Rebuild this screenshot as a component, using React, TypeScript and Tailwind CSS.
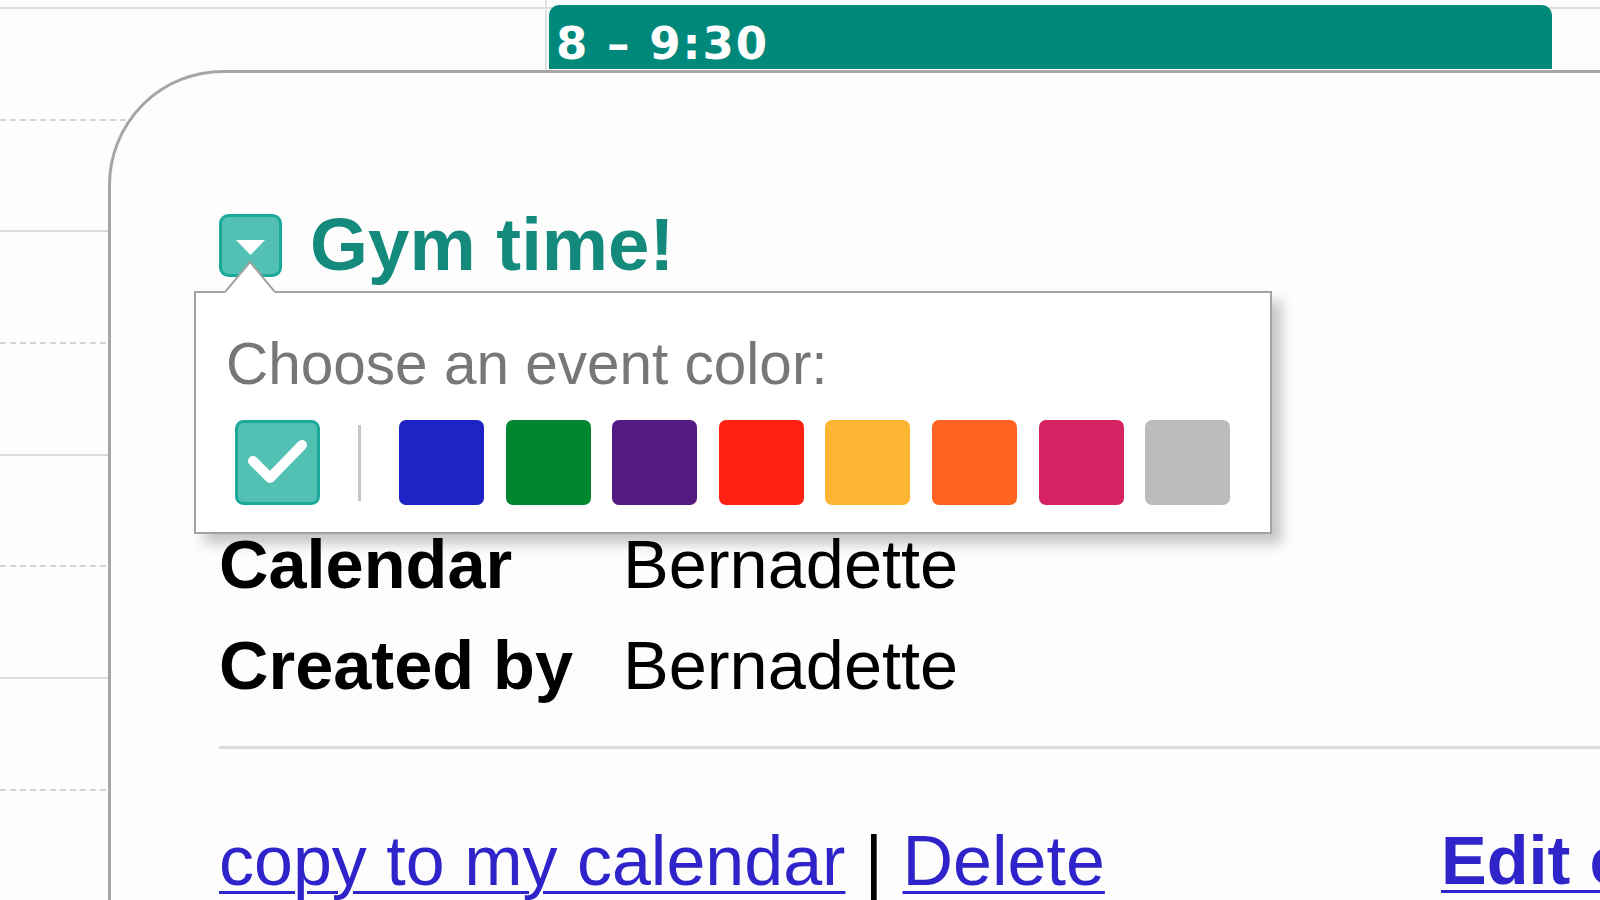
import React from 'react';

const swatches = ['#1d23c5', '#00872d', '#561a83', '#ff2212', '#ffb534', '#ff6320', '#d52262', '#bcbcbc'];

const GridRows: React.FC = () => (
  <div className="mt-[7px] border-t-2 border-[#dedede]">
    {Array.from({ length: 8 }).map((_, i) => (
      <div
        key={i}
        className={
          i % 2 === 0
            ? 'h-[111.7px] border-b-2 border-dashed border-[#d4d4d4]'
            : 'h-[111.7px] border-b-2 border-solid border-[#dcdcdc]'
        }
      />
    ))}
  </div>
);

const ColorChooser: React.FC = () => (
  <div className="absolute left-[83px] top-[218px] w-[1078px] h-[243px] border-2 border-[#a2a2a2] bg-white shadow-[10px_10px_12px_rgba(0,0,0,0.22)] pl-[30px] pt-[38px]">
    {/* caret pointing at the title chip */}
    <svg className="absolute left-[29px] top-[-33px]" width="50" height="35" viewBox="0 0 50 35">
      <path d="M0 35 L0 32 L25 2 L50 32 L50 35 Z" fill="#fff" />
      <path d="M0 32 L25 2 L50 32" fill="none" stroke="#a2a2a2" strokeWidth="2" />
    </svg>
    <div className="text-[58.5px] leading-[66px] text-[#777]">Choose an event color:</div>
    <div className="mt-[23px] ml-[9px] flex items-center">
      <svg width="85" height="85" viewBox="0 0 85 85">
        <rect x="1.5" y="1.5" width="82" height="82" rx="7" fill="#52c1b3" stroke="#1ba99a" strokeWidth="3" />
        <path d="M18 41 L35 58 L67 25" fill="none" stroke="#fff" strokeWidth="10" strokeLinecap="round" strokeLinejoin="round" />
      </svg>
      <div className="mx-[38px] w-[3px] h-[76px] bg-[#c6c6c6]" />
      <div className="flex gap-[21.6px]">
        {swatches.map((c) => (
          <div key={c} className="w-[85px] h-[85px] rounded-[7px]" style={{ backgroundColor: c }} />
        ))}
      </div>
    </div>
  </div>
);

const App: React.FC = () => {
  return (
    <div className="relative w-[1600px] h-[900px] overflow-hidden bg-[#fdfdfd] font-['Liberation_Sans',Arial,sans-serif]">
      {/* calendar grid behind the bubble */}
      <div className="flex h-full">
        <div className="w-[547px] shrink-0 border-r-2 border-[#e2e2e2]">
          <GridRows />
        </div>
        <div className="relative flex-1">
          <GridRows />
          <div className="absolute left-[2px] top-[5px] w-[1003px] h-[64px] rounded-t-[10px] bg-[#00887a] pl-[7px] pt-[7px] font-['DejaVu_Sans',Verdana,sans-serif] font-bold text-[45px] leading-[64px] tracking-[2px] text-white">
            8 – 9:30
          </div>
        </div>
      </div>

      {/* event bubble */}
      <div className="absolute left-[108px] top-[70px] w-[1600px] h-[1000px] rounded-tl-[115px] border-[3px] border-[#a6a6a6] bg-[#fdfdfd] pl-[108px] pt-[141px]">
        <div className="flex items-center gap-[28px] h-[63px]">
          <svg width="63" height="63" viewBox="0 0 63 63">
            <rect x="1.5" y="1.5" width="60" height="60" rx="8" fill="#52c1b3" stroke="#1ba99a" strokeWidth="3" />
            <path d="M17 26 H46 L31.5 41 Z" fill="#fff" />
          </svg>
          <div className="text-[74.5px] leading-none font-bold text-[#138a7c]">Gym time!</div>
        </div>

        <ColorChooser />

        <div className="mt-[237px] text-[68.5px] leading-[101px] text-black">
          <div className="flex">
            <div className="w-[404px] font-bold">Calendar</div>
            <div>Bernadette</div>
          </div>
          <div className="flex">
            <div className="w-[404px] font-bold">Created by</div>
            <div>Bernadette</div>
          </div>
        </div>

        <div className="mt-[30px] border-t-[3px] border-[#dddddd]" />

        <div className="mt-[72px] flex text-[70px] leading-[80px]">
          <div className="w-[1222px] shrink-0">
            <a href="#" className="text-[#2f24c9] underline decoration-[3px] underline-offset-[6px]">copy to my calendar</a>
            <span className="text-black"> | </span>
            <a href="#" className="text-[#2f24c9] underline decoration-[3px] underline-offset-[6px]">Delete</a>
          </div>
          <a href="#" className="text-[68.5px] font-bold text-[#2f24c9] underline decoration-[3px] underline-offset-[6px] whitespace-nowrap">Edit event »</a>
        </div>
      </div>
    </div>
  );
};

export default App;
